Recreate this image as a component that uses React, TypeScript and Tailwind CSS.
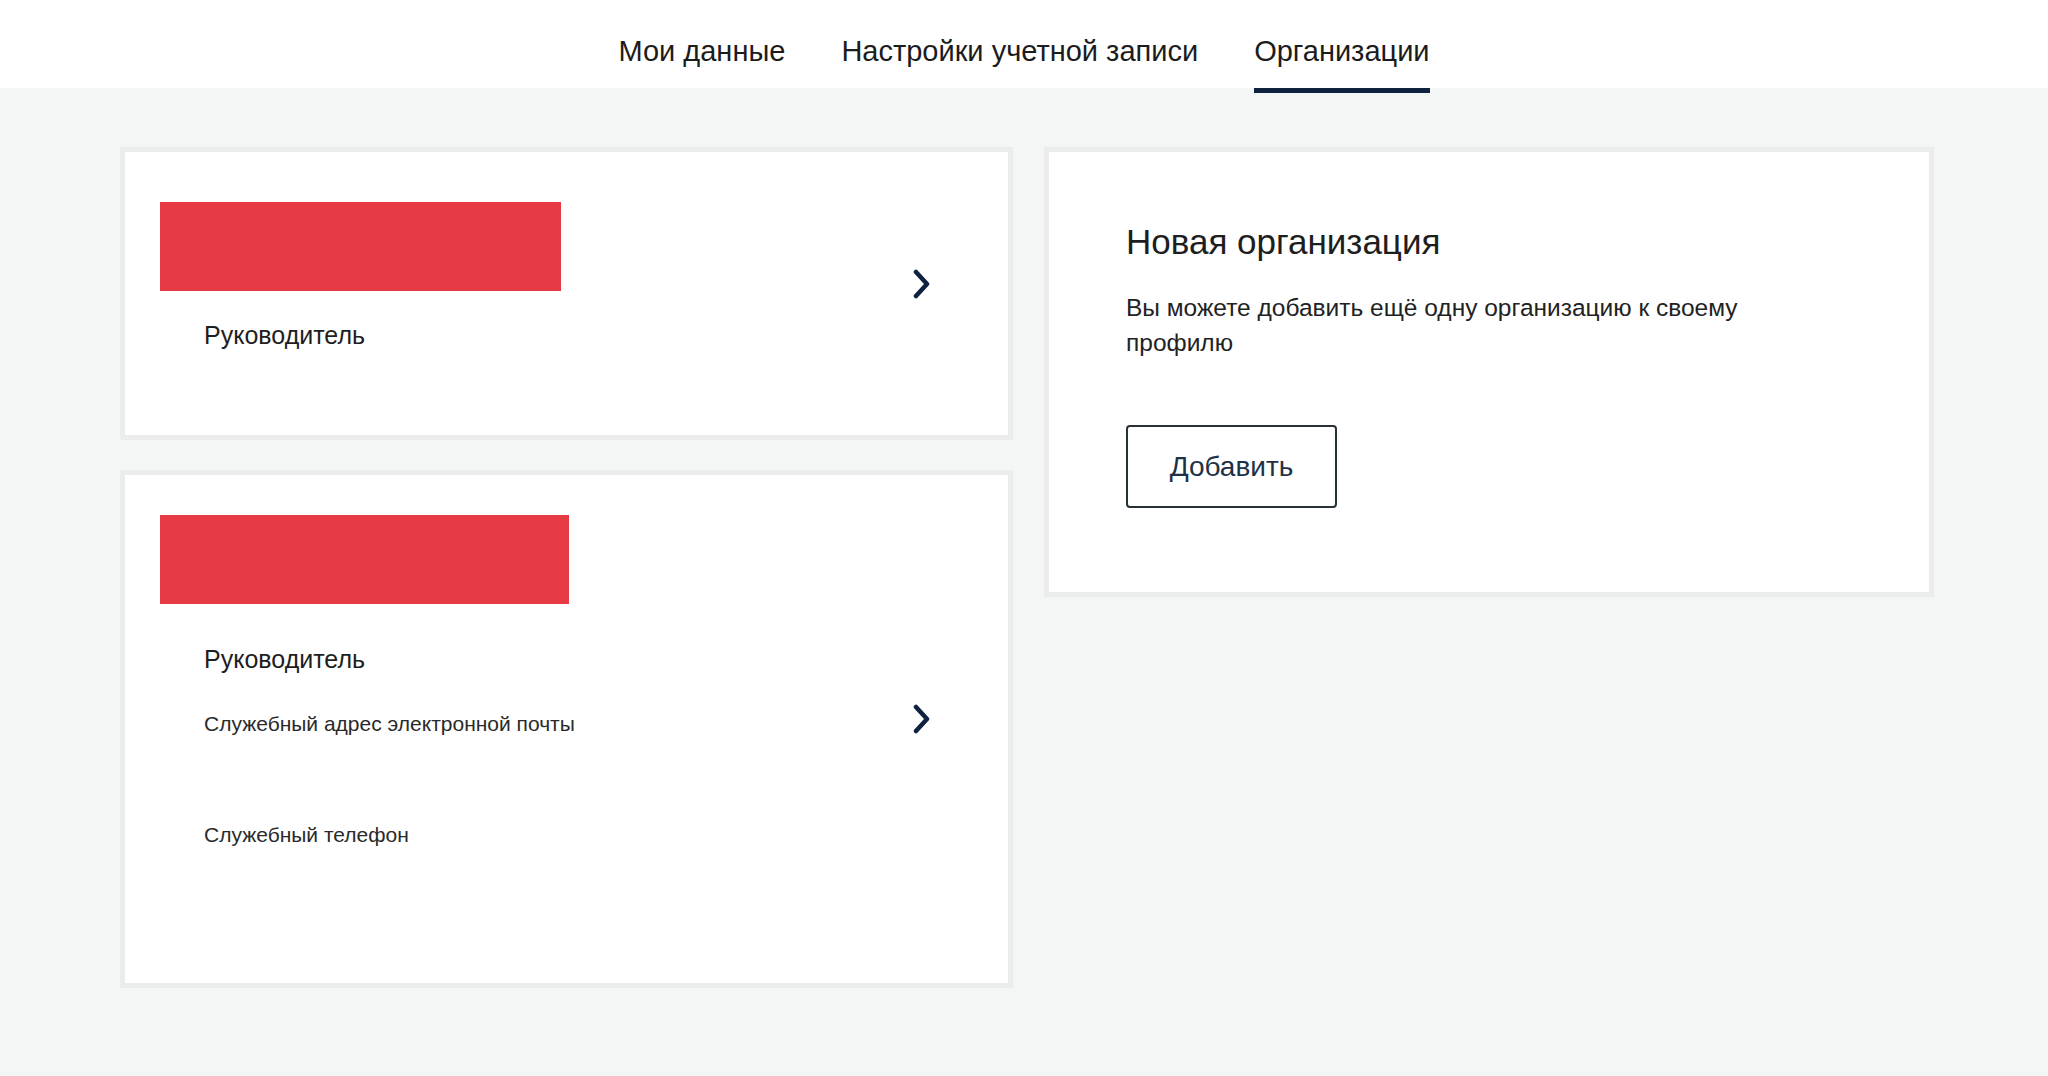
const font = { fontFamily: '"Liberation Sans", Arial, sans-serif' };

function Chevron() {
  return (
    <svg width="20" height="30" viewBox="0 0 20 30" fill="none" className="shrink-0">
      <path d="M4 3 L15 15 L4 27" stroke="#0f2340" strokeWidth="4.5" strokeLinecap="round" strokeLinejoin="round" />
    </svg>
  );
}

export default function App() {
  return (
    <div className="min-h-screen bg-[#f4f6f6] text-[#1e1e1e]" style={font}>
      {/* tabs */}
      <div className="h-[88px] bg-white flex justify-center gap-[56px]">
        <a className="relative h-[93px] flex items-center pt-[16px] text-[29px] text-[#1c1c1c] border-b-[5px] border-transparent">Мои данные</a>
        <a className="relative h-[93px] flex items-center pt-[16px] text-[29px] text-[#1c1c1c] border-b-[5px] border-transparent">Настройки учетной записи</a>
        <a className="relative h-[93px] flex items-center pt-[16px] text-[29px] text-[#1c1c1c] border-b-[5px] border-[#0f2340]">Организации</a>
      </div>

      <div className="flex gap-[31px] pl-[120px] pt-[59px]">
        <div className="flex flex-col gap-[30px] w-[893px]">
          {/* org 1 */}
          <div className="h-[293px] bg-white border-[5px] border-[#ebeded] flex items-center pr-[76px]">
            <div className="flex-1 pl-[35px] pt-[50px] self-start">
              <div className="w-[401px] h-[89px] bg-[#e83a44]" />
              <div className="pl-[44px] mt-[29px] text-[25px] leading-[30px]">Руководитель</div>
            </div>
            <div className="-mt-[20px]">
              <Chevron />
            </div>
          </div>

          {/* org 2 */}
          <div className="h-[518px] bg-white border-[5px] border-[#ebeded] flex pr-[76px]">
            <div className="flex-1 pl-[35px] pt-[40px]">
              <div className="w-[409px] h-[89px] bg-[#e83a44]" />
              <div className="pl-[44px] mt-[40px] text-[25px] leading-[30px]">Руководитель</div>
              <div className="pl-[44px] mt-[37px] text-[21px] leading-[26px] text-[#2a2a2a]">Служебный адрес электронной почты</div>
              <div className="pl-[44px] mt-[85px] text-[21px] leading-[26px] text-[#2a2a2a]">Служебный телефон</div>
            </div>
            <div className="pt-[229px]">
              <Chevron />
            </div>
          </div>
        </div>

        {/* new org */}
        <div className="w-[890px] h-[450px] self-start bg-white border-[5px] border-[#ebeded] pl-[77px] pt-[68px]">
          <h2 className="text-[35px] leading-[44px] text-[#1e1e1e]">Новая организация</h2>
          <p className="mt-[26px] max-w-[660px] text-[24.5px] leading-[35px] text-[#222]">
            Вы можете добавить ещё одну организацию к своему профилю
          </p>
          <button className="mt-[65px] w-[211px] h-[83px] border-2 border-[#273238] rounded-[4px] text-[28px] text-[#1d3247]">
            Добавить
          </button>
        </div>
      </div>
    </div>
  );
}
